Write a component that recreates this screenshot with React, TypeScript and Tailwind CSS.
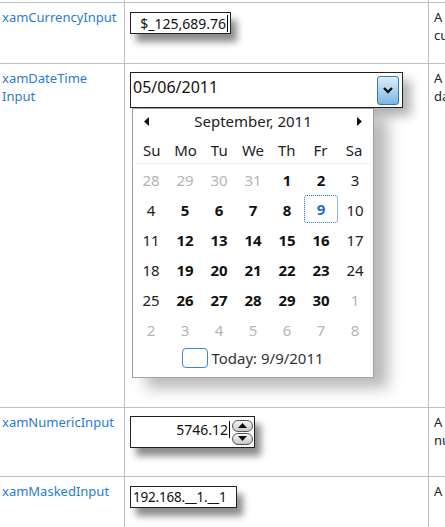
import React from "react";

const FONT = "font-['Segoe_UI','Noto_Sans',sans-serif]";

type Day = { n: number; kind: "other" | "weekend" | "week" | "selected" };

const weeks: Day[][] = [
  [28, 29, 30, 31].map((n) => ({ n, kind: "other" as const })).concat([
    { n: 1, kind: "week" },
    { n: 2, kind: "week" },
    { n: 3, kind: "weekend" },
  ]),
  [
    { n: 4, kind: "weekend" },
    { n: 5, kind: "week" },
    { n: 6, kind: "week" },
    { n: 7, kind: "week" },
    { n: 8, kind: "week" },
    { n: 9, kind: "selected" },
    { n: 10, kind: "weekend" },
  ],
  [11, 12, 13, 14, 15, 16, 17].map((n, i) => ({ n, kind: i === 0 || i === 6 ? "weekend" : "week" })),
  [18, 19, 20, 21, 22, 23, 24].map((n, i) => ({ n, kind: i === 0 || i === 6 ? "weekend" : "week" })),
  [
    { n: 25, kind: "weekend" },
    { n: 26, kind: "week" },
    { n: 27, kind: "week" },
    { n: 28, kind: "week" },
    { n: 29, kind: "week" },
    { n: 30, kind: "week" },
    { n: 1, kind: "other" },
  ],
  [2, 3, 4, 5, 6, 7, 8].map((n) => ({ n, kind: "other" as const })),
];

function DayCell({ d }: { d: Day }) {
  if (d.kind === "selected") {
    return (
      <div className="h-[30px] flex items-start justify-center">
        <div className="w-[34px] h-[28px] rounded-[3px] border-[1.5px] border-dotted border-[#1f6fd1] flex items-center justify-center font-bold text-[#1f6fd1]">
          {d.n}
        </div>
      </div>
    );
  }
  const cls =
    d.kind === "other"
      ? "text-[#b4b4b4]"
      : d.kind === "weekend"
      ? "text-[#222]"
      : "text-[#111] font-bold";
  return <div className={"h-[30px] flex items-center justify-center " + cls}>{d.n}</div>;
}

function Caret() {
  return <span className="inline-block w-px h-[17px] bg-black ml-[1px]" />;
}

function Calendar() {
  return (
    <div className="ml-[2px] w-[242px] h-[270px] bg-white border border-[#a0a0a0] shadow-[14px_10px_14px_rgba(0,0,0,0.28)] flex flex-col text-[15px]">
      <div className="h-[28px] pb-[3px] flex items-center justify-between px-[11px] text-[#222]">
        <svg width="5" height="9" viewBox="0 0 5 9">
          <path d="M5 0 L0 4.5 L5 9 Z" fill="#111" />
        </svg>
        <span>September, 2011</span>
        <svg width="5" height="9" viewBox="0 0 5 9">
          <path d="M0 0 L5 4.5 L0 9 Z" fill="#111" />
        </svg>
      </div>
      <div className="mx-[2px] h-[27px] grid grid-cols-7 border-b border-[#ececec] text-[#222]">
        {["Su", "Mo", "Tu", "We", "Th", "Fr", "Sa"].map((d) => (
          <div key={d} className="flex items-center justify-center">
            {d}
          </div>
        ))}
      </div>
      <div className="pl-[1px] pt-[1px]">
        {weeks.map((w, i) => (
          <div key={i} className="grid grid-cols-[repeat(7,34px)]">
            {w.map((d, j) => (
              <DayCell key={j} d={d} />
            ))}
          </div>
        ))}
      </div>
      <div className="flex items-center justify-center gap-[3px] pt-[2px] text-[#333]">
        <span className="inline-block w-[26px] h-[20px] rounded-[4px] border-[1.5px] border-[#3a86d8]" />
        <span>Today: 9/9/2011</span>
      </div>
    </div>
  );
}

function SpinButton({ up }: { up?: boolean }) {
  return (
    <div className="w-[21px] h-[12px] rounded-full border border-[#555] bg-gradient-to-b from-[#f6f6f6] to-[#c9c9c9] flex items-center justify-center">
      <svg width="9" height="5" viewBox="0 0 9 5">
        <path d={up ? "M0 5 L4.5 0 L9 5 Z" : "M0 0 L4.5 5 L9 0 Z"} fill="#111" />
      </svg>
    </div>
  );
}

export default function App() {
  const cellBorder = "border-r border-[#c0c0c0]";
  const label = "pl-[2px] pt-[5px] text-[13px] leading-[18px] text-[#2a7bd3]";
  const desc = "pl-[5px] pt-[5px] text-[13px] leading-[18px] text-[#222] whitespace-nowrap";

  return (
    <div className={"w-[445px] h-[527px] overflow-hidden bg-white flex flex-col " + FONT}>
      {/* stub of the row above */}
      <div className="h-[2px] grid grid-cols-[125px_304px_300px] shrink-0">
        <div className={cellBorder} />
        <div className={cellBorder} />
        <div />
      </div>

      {/* xamCurrencyInput */}
      <div className="h-[61px] shrink-0 grid grid-cols-[125px_304px_300px] border-t border-[#c0c0c0]">
        <div className={cellBorder + " " + label}>xamCurrencyInput</div>
        <div className={cellBorder + " pl-[5px] pt-[9px]"}>
          <div className="w-[101px] h-[22px] border border-[#222] bg-white shadow-[6px_8px_7px_rgba(0,0,0,0.45)] flex items-center justify-end pr-[2px] text-[14px] text-[#111]">
            <span>$_125,689.76</span>
            <Caret />
          </div>
        </div>
        <div className={desc}>
          <div>A currency input control</div>
          <div>currency values.</div>
        </div>
      </div>

      {/* xamDateTimeInput */}
      <div className="h-[344px] shrink-0 grid grid-cols-[125px_304px_300px] border-t border-[#c0c0c0]">
        <div className={cellBorder + " " + label}>
          xamDateTime
          <br />
          Input
        </div>
        <div className={cellBorder + " pl-[5px] pt-[8px]"}>
          <div className="w-[273px] h-[36px] border border-[#222] bg-white shadow-[8px_8px_10px_rgba(0,0,0,0.3)] flex items-center justify-between pl-[2px] pr-[3px] text-[16px] text-[#111]">
            <span className="-mt-[6px]">05/06/2011</span>
            <div className="w-[22px] h-[29px] rounded-[3px] border border-[#3c79a8] bg-gradient-to-b from-[#dcefFb] to-[#7db6e2] flex items-center justify-center">
              <svg width="10" height="7" viewBox="0 0 10 7">
                <path d="M1 1 L5 5 L9 1" fill="none" stroke="#111" strokeWidth="2.4" />
              </svg>
            </div>
          </div>
          <Calendar />
        </div>
        <div className={desc}>
          <div>A date time input control</div>
          <div>date and time values.</div>
        </div>
      </div>

      {/* xamNumericInput */}
      <div className="h-[69px] shrink-0 grid grid-cols-[125px_304px_300px] border-t border-[#c0c0c0]">
        <div className={cellBorder + " " + label}>xamNumericInput</div>
        <div className={cellBorder + " pl-[5px] pt-[8px]"}>
          <div className="w-[125px] h-[32px] border border-[#222] bg-white shadow-[6px_8px_7px_rgba(0,0,0,0.45)] flex items-center justify-end pr-px text-[14px] text-[#111]">
            <span className="-mt-[6px] flex items-center">
              <span>5746.12</span>
              <Caret />
            </span>
            <div className="ml-[2px] flex flex-col gap-[1px]">
              <SpinButton up />
              <SpinButton />
            </div>
          </div>
        </div>
        <div className={desc}>
          <div>A numeric input control</div>
          <div>numeric values.</div>
        </div>
      </div>

      {/* xamMaskedInput */}
      <div className="flex-1 grid grid-cols-[125px_304px_300px] border-t border-[#c0c0c0]">
        <div className={cellBorder + " " + label}>xamMaskedInput</div>
        <div className={cellBorder + " pl-[5px] pt-[9px]"}>
          <div className="w-[107px] h-[22px] border border-[#222] bg-white shadow-[6px_8px_7px_rgba(0,0,0,0.45)] flex items-center pl-[2px] text-[13.5px] tracking-[-0.2px] text-[#111] whitespace-nowrap overflow-hidden">
            192.168.__1.__1
          </div>
        </div>
        <div className={desc}>
          <div>A masked input control</div>
        </div>
      </div>
    </div>
  );
}
